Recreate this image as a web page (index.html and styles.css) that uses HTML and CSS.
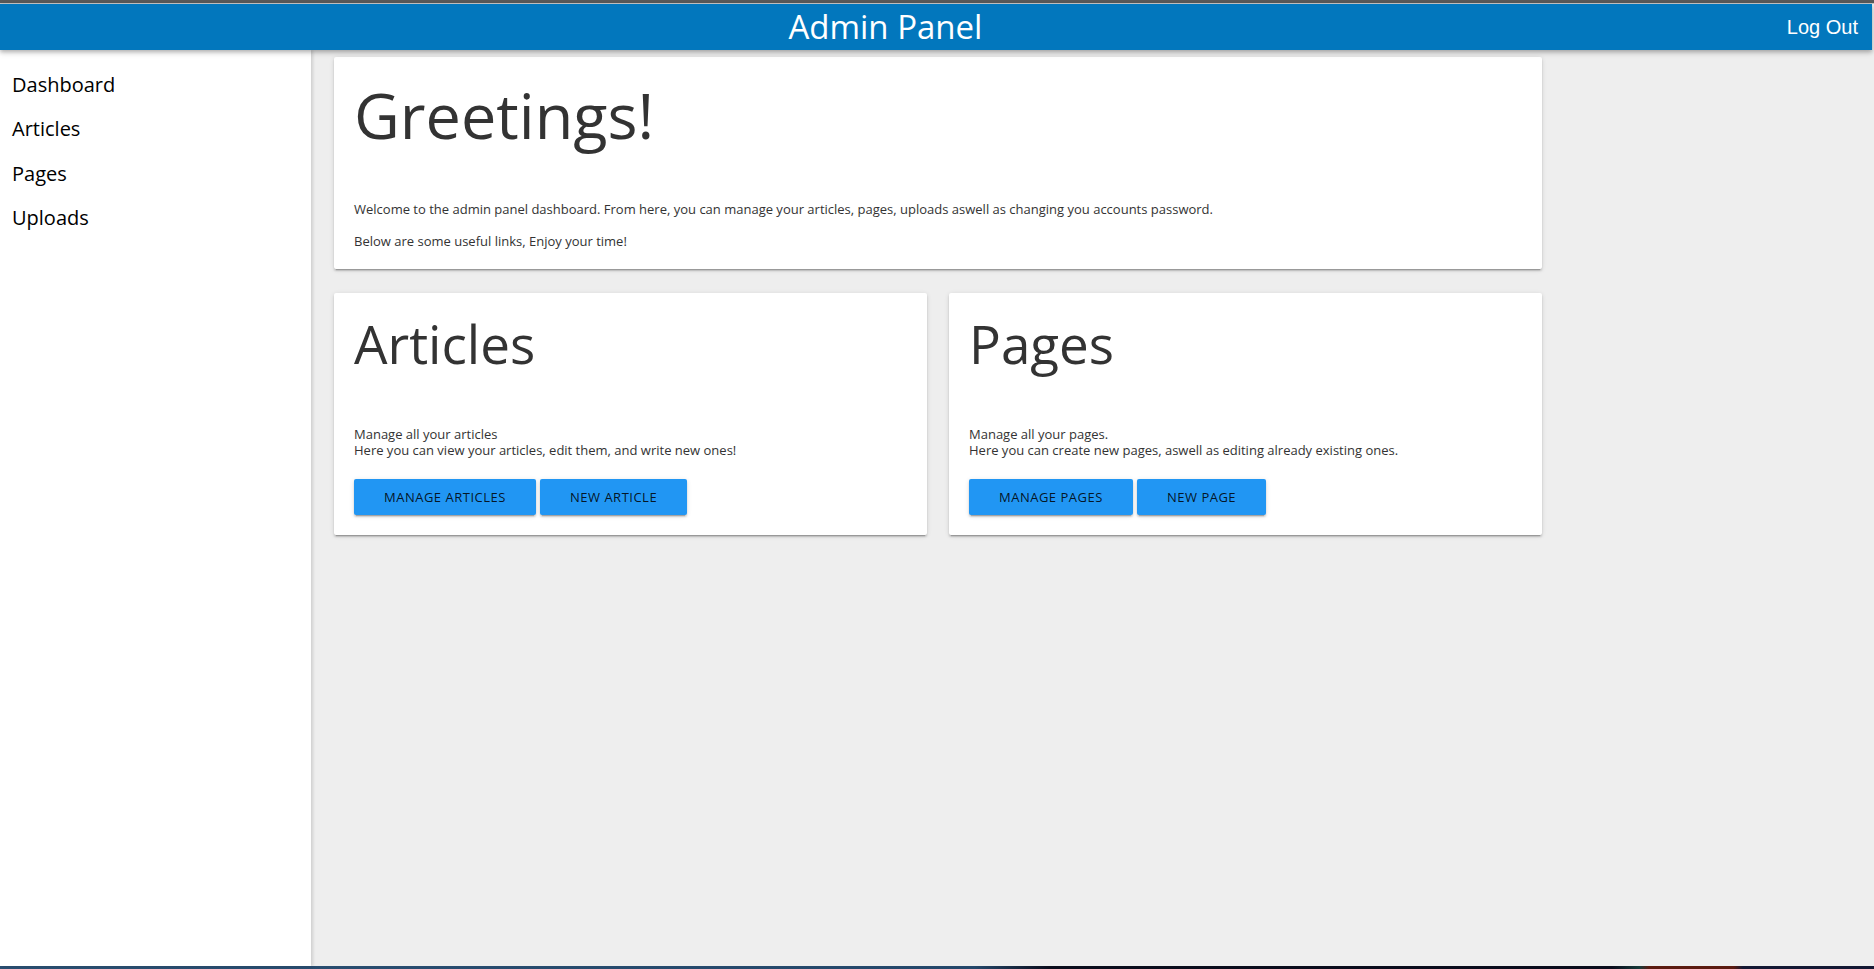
FILE: index.html
```html
<!DOCTYPE html>
<html lang="en">
<head>
<meta charset="utf-8">
<title>Admin Panel</title>
<link rel="stylesheet" href="styles.css">
</head>
<body>
<div class="chrome-top"></div>
<div class="app">
  <header class="topbar">
    <div class="title">Admin Panel</div>
    <a class="logout" href="#">Log Out</a>
  </header>
  <div class="layout">
    <nav class="sidebar">
      <a class="nav-item" href="#">Dashboard</a>
      <a class="nav-item" href="#">Articles</a>
      <a class="nav-item" href="#">Pages</a>
      <a class="nav-item" href="#">Uploads</a>
    </nav>
    <main class="content">
      <div class="grid">
        <section class="card card-wide">
          <h1 class="card-title big">Greetings!</h1>
          <p class="text">Welcome to the admin panel dashboard. From here, you can manage your articles, pages, uploads aswell as changing you accounts password.</p>
          <p class="text last">Below are some useful links, Enjoy your time!</p>
        </section>
        <section class="card">
          <h2 class="card-title">Articles</h2>
          <p class="text tight">Manage all your articles<br>Here you can view your articles, edit them, and write new ones!</p>
          <div class="actions">
            <a class="btn" href="#">Manage Articles</a>
            <a class="btn" href="#">New Article</a>
          </div>
        </section>
        <section class="card">
          <h2 class="card-title">Pages</h2>
          <p class="text tight">Manage all your pages.<br>Here you can create new pages, aswell as editing already existing ones.</p>
          <div class="actions">
            <a class="btn" href="#">Manage Pages</a>
            <a class="btn" href="#">New Page</a>
          </div>
        </section>
      </div>
    </main>
  </div>
</div>
<div class="taskbar"></div>
</body>
</html>
```
FILE: styles.css
```css
html, body {
  margin: 0;
  padding: 0;
  height: 100%;
}
body {
  display: flex;
  flex-direction: column;
  height: 969px;
  overflow: hidden;
  font-family: "Open Sans", "Noto Sans", sans-serif;
  background: #eeeeee;
}
.chrome-top {
  height: 3px;
  background: #585858;
  border-bottom: 1px solid #c4c4c4;
  flex: none;
}
.app {
  flex: 1;
  display: flex;
  flex-direction: column;
  min-height: 0;
  margin-right: 2px;
}
.topbar {
  flex: none;
  height: 46px;
  background: #0277bd;
  display: flex;
  align-items: center;
  position: relative;
  z-index: 2;
  box-shadow: 0 2px 4px rgba(0,0,0,0.25), 0 4px 6px rgba(0,0,0,0.08);
}
.title {
  flex: 1;
  text-align: center;
  color: #ffffff;
  font-size: 33px;
  font-weight: 400;
  line-height: 46px;
}
.logout {
  color: #ffffff;
  text-decoration: none;
  font-family: "Liberation Sans", Arial, sans-serif;
  font-size: 20px;
  padding: 0 14px 0 16px;
  line-height: 46px;
}
.layout {
  flex: 1;
  display: flex;
  min-height: 0;
}
.sidebar {
  width: 311px;
  flex: none;
  background: #ffffff;
  padding-top: 13px;
  display: flex;
  flex-direction: column;
  position: relative;
  z-index: 1;
  box-shadow: 2px 0 3px rgba(0,0,0,0.13);
}
.nav-item {
  color: #000000;
  text-decoration: none;
  font-size: 20px;
  line-height: 44.4px;
  padding-left: 12px;
}
.content {
  flex: 1;
  padding: 7px 0 0 23px;
}
.grid {
  width: 1208px;
  display: grid;
  grid-template-columns: 593px 593px;
  column-gap: 22px;
  row-gap: 24px;
  align-items: start;
}
.card {
  background: #ffffff;
  border-radius: 2px;
  padding: 15px 20px 20px;
  box-shadow: 0 2px 2px 0 rgba(0,0,0,0.14), 0 3px 1px -2px rgba(0,0,0,0.2), 0 1px 5px 0 rgba(0,0,0,0.12);
}
.card-wide {
  grid-column: 1 / 3;
  padding-bottom: 20px;
}
.card-title {
  margin: 0 0 46px;
  font-size: 53px;
  font-weight: 400;
  line-height: 1.362;
  color: #333333;
}
.card-title.big {
  font-size: 63px;
  margin-bottom: 43px;
}
.text {
  margin: 0 0 16px;
  font-size: 13px;
  line-height: 16px;
  color: #333333;
}
.text.last {
  margin-bottom: 0;
}
.text.tight {
  margin-bottom: 21px;
}
.actions {
  display: block;
}
.btn {
  display: inline-block;
  height: 36px;
  line-height: 36px;
  padding: 0 30px;
  background: #2196f3;
  color: rgba(0,0,0,0.87);
  text-decoration: none;
  text-transform: uppercase;
  font-size: 13px;
  letter-spacing: 0.5px;
  border-radius: 2px;
  box-shadow: 0 2px 2px 0 rgba(0,0,0,0.14), 0 3px 1px -2px rgba(0,0,0,0.2), 0 1px 5px 0 rgba(0,0,0,0.12);
}
.taskbar {
  flex: none;
  height: 3px;
  background: linear-gradient(to right, #2b4f72 0%, #24476a 52%, #0b0d1c 56%, #0a0c1c 86%, #173a3a 87.5%, #5b1a10 88%, #5b1a10 92.5%, #141833 93%, #141833 100%);
}
```
